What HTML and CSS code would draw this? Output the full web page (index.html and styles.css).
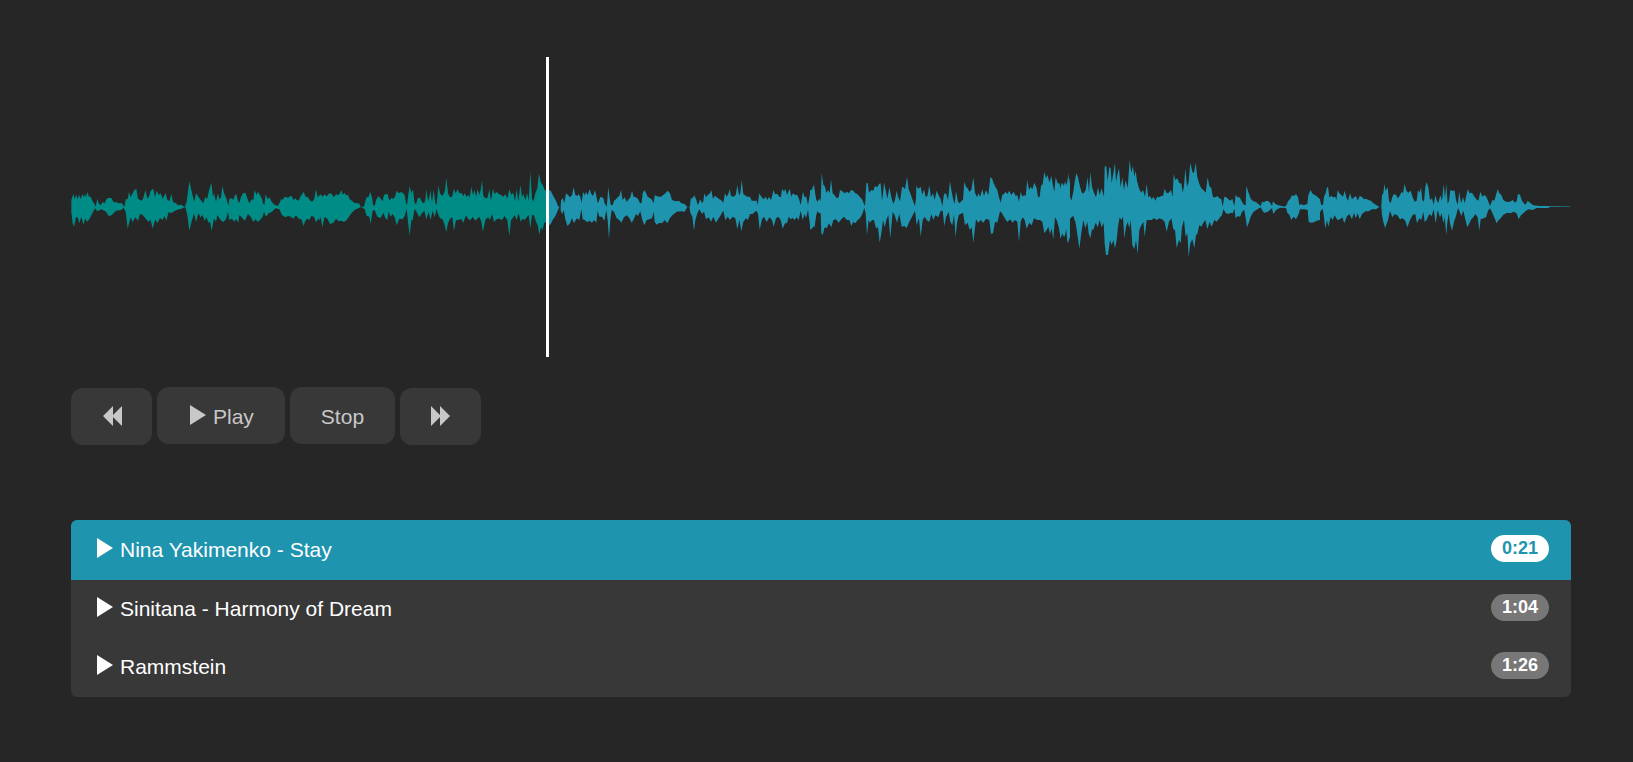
FILE: index.html
```html
<!DOCTYPE html>
<html lang="en">
<head>
<meta charset="utf-8">
<title>Audio player</title>
<link rel="stylesheet" href="styles.css">
</head>
<body>
<main class="player">
  <div class="wave">
    <svg class="wave-svg" viewBox="0 0 4500 900" preserveAspectRatio="none" role="img" aria-label="Waveform">
      <g class="played">
        <path transform="translate(-33 249)" d="M34,201 34,180 40,162 44,178 48,164 53,178 57,164 62,177 67,162 71,172 75,162 78,172 82,156 87,170 92,170 97,182 102,190 107,200 112,176 116,190 122,196 128,186 134,190 140,176 147,173 155,175 160,186 170,187 176,190 186,190 193,201 198,176 203,178 207,156 212,172 218,160 223,150 229,147 234,176 240,180 246,182 251,170 256,150 262,176 267,170 272,152 280,146 285,172 290,152 296,165 302,160 308,176 312,168 317,160 322,180 328,184 334,162 339,186 348,190 354,196 364,194 374,201 380,185 388,124 394,150 399,172 403,185 408,160 415,170 422,180 430,190 436,170 441,178 447,152 454,128 459,170 462,160 468,185 474,160 478,178 483,172 487,138 493,162 499,175 503,190 506,195 508,176 516,175 520,180 525,165 529,163 533,180 537,190 543,172 549,160 556,158 562,175 568,190 575,178 580,180 584,150 590,165 594,155 600,165 606,176 609,190 613,196 617,162 623,178 628,172 635,185 644,195 654,197 660,186 664,176 668,180 673,172 678,170 684,174 688,170 695,167 700,180 706,175 710,180 716,182 722,168 731,156 737,170 744,172 752,184 758,184 763,176 768,148 773,172 780,165 780,240 776,235 768,247 762,230 754,228 748,240 741,236 736,242 731,258 724,238 716,236 708,226 700,236 692,230 684,228 676,232 666,225 658,208 646,205 636,215 626,220 618,230 612,215 608,230 600,240 594,246 586,238 580,246 572,230 564,222 554,242 545,232 538,225 535,248 528,236 524,245 515,236 508,240 504,215 498,238 490,246 484,242 478,235 472,225 468,245 462,235 455,273 450,245 445,248 440,232 434,242 428,225 422,232 415,220 408,246 402,220 396,240 388,272 382,225 376,201 364,206 350,210 340,215 332,220 326,215 319,242 314,228 307,240 300,234 292,250 286,238 278,266 272,240 265,245 256,235 248,225 240,222 234,242 226,232 218,246 212,232 203,266 197,215 191,203 184,210 168,212 155,226 146,228 138,215 124,208 112,214 105,205 96,222 88,238 80,245 76,235 70,254 64,230 58,250 53,232 48,232 42,260 38,250 34,215Z"/>
        <path transform="translate(717 249)" d="M27,201 27,170 32,163 38,170 44,163 50,170 55,162 60,160 66,163 72,172 78,162 84,166 90,160 94,149 98,164 104,158 108,166 114,164 119,178 126,182 132,188 140,190 147,190 152,200 162,200 166,184 170,172 175,172 181,156 186,172 189,195 194,198 199,178 206,168 212,176 218,184 222,164 228,163 233,162 238,182 244,174 250,176 255,170 260,152 266,160 272,156 278,158 284,165 288,190 291,195 294,170 299,138 304,160 309,148 313,185 318,194 323,175 330,173 336,186 342,190 346,180 349,148 354,184 358,172 361,150 366,186 371,150 376,190 380,194 385,137 390,160 396,168 401,162 405,150 409,114 414,160 420,172 426,170 432,146 437,160 443,148 448,160 454,158 460,168 464,160 470,170 474,165 479,172 484,140 489,165 494,150 498,170 503,148 508,165 512,150 516,122 520,168 526,174 532,175 538,148 543,182 549,146 554,162 560,156 567,162 573,165 580,170 586,162 592,176 598,148 604,164 610,158 615,184 620,148 625,185 631,135 636,170 641,162 646,182 651,158 656,182 661,95 666,175 670,185 676,160 682,145 687,100 692,126 698,134 704,150 709,152 714,150 714,262 709,245 702,250 698,270 693,262 688,284 683,255 678,245 672,226 666,224 661,265 656,225 650,232 644,240 638,236 632,245 626,220 620,240 614,225 608,235 603,240 598,288 592,240 584,228 576,240 568,236 560,238 552,246 546,222 540,240 534,232 526,240 519,275 514,245 508,230 502,236 496,242 488,230 482,240 475,238 468,226 460,248 453,236 446,240 438,240 432,273 427,232 420,236 414,250 409,276 404,256 398,238 390,235 384,222 380,206 374,232 368,212 362,240 356,216 349,238 343,212 336,220 328,232 320,216 314,206 308,240 304,240 299,286 294,245 290,207 284,228 278,238 268,236 260,256 254,232 248,222 242,230 236,215 232,240 226,234 220,218 212,234 202,230 194,210 188,212 182,252 178,230 170,228 164,208 154,201 146,204 134,210 124,220 116,232 110,240 102,246 94,242 86,244 78,236 70,248 60,252 52,236 44,230 37,262 32,232 27,242Z"/>
      </g>
      <g class="upcoming">
        <path transform="translate(717 249)" d="M714,150 722,152 730,168 738,182 744,198 748,201 744,210 736,228 728,240 722,252 714,260Z"/>
        <path transform="translate(1467 249)" d="M2,201 3,182 8,174 13,190 18,160 24,165 30,172 36,166 41,142 46,165 52,168 56,162 61,170 65,190 69,155 74,166 78,156 83,165 89,148 94,162 99,168 105,150 109,168 113,190 117,182 121,170 130,174 134,190 140,200 142,180 145,142 149,175 152,194 158,196 162,182 168,178 173,172 178,168 183,150 188,180 194,172 200,185 206,178 211,172 216,152 221,170 227,172 234,176 240,190 245,188 248,160 253,150 258,158 263,170 270,175 275,178 281,190 284,166 290,168 296,170 303,170 310,165 316,160 323,152 330,160 336,180 342,182 350,184 357,182 364,190 374,192 382,201 390,200 392,176 398,174 403,166 409,180 413,195 416,190 421,178 426,190 430,184 433,160 438,172 444,164 450,160 454,150 459,176 464,168 469,170 476,176 483,180 490,188 495,160 500,170 505,162 509,148 513,168 520,170 527,166 532,136 537,166 541,160 545,120 550,162 555,166 562,170 570,170 575,182 582,182 590,182 593,196 598,160 604,170 611,178 617,170 622,180 627,170 633,180 637,166 640,150 645,162 652,162 658,170 662,172 667,146 672,155 676,146 681,165 689,146 694,170 699,160 706,165 712,165 718,180 722,196 729,155 734,172 739,170 744,195 750,162 754,148 758,155 762,132 767,175 772,186 780,175 780,215 774,210 768,225 764,262 758,258 752,270 748,240 744,210 738,235 734,222 728,240 722,212 716,240 710,232 704,240 698,234 692,238 686,230 681,250 675,250 668,266 662,240 655,230 648,235 641,260 636,240 628,232 620,246 612,230 606,238 599,270 594,220 588,212 578,222 570,222 564,240 558,235 550,245 544,274 538,240 532,268 526,235 518,230 510,240 503,230 496,240 490,212 482,226 476,235 468,248 460,230 453,245 446,232 438,238 432,215 426,222 418,208 412,220 406,240 402,272 397,230 391,218 388,201 382,201 374,215 364,214 350,215 338,225 330,234 322,250 314,240 306,250 298,248 290,254 284,245 281,215 276,235 268,238 260,240 253,256 247,240 241,214 234,228 228,222 220,240 215,248 208,234 200,226 192,232 184,248 178,240 170,235 162,215 155,210 151,240 147,298 143,240 139,210 133,242 126,230 118,230 113,212 109,248 102,240 96,248 88,242 82,247 74,240 68,238 64,208 58,240 50,235 42,250 36,234 30,250 22,258 16,238 11,210 7,222 2,212Z"/>
        <path transform="translate(2217 249)" d="M0,201 0,150 5,152 10,136 15,160 20,190 26,180 32,182 35,100 40,134 45,140 49,158 54,150 59,160 63,118 68,160 74,166 80,175 86,172 90,150 97,154 104,160 111,155 117,160 123,150 130,152 136,160 142,162 149,170 156,178 162,192 165,198 169,130 173,128 177,158 184,150 190,152 195,138 202,142 207,132 212,130 216,182 219,160 222,128 227,150 232,176 238,142 244,172 250,192 255,180 260,152 264,170 270,184 276,140 280,142 285,148 291,110 296,148 301,160 307,178 315,198 318,175 319,138 325,146 332,140 337,164 342,148 347,170 352,168 358,136 363,172 369,160 374,180 380,152 386,166 392,178 397,198 402,162 408,160 414,180 420,124 425,155 430,180 434,192 438,152 444,185 449,190 455,182 459,180 463,125 468,140 473,145 478,155 484,150 490,112 495,158 501,172 505,160 510,170 517,148 522,168 528,150 535,165 541,112 546,115 551,130 556,140 562,150 567,172 572,188 577,164 582,162 587,155 592,162 598,152 604,165 611,155 617,168 622,165 627,185 632,155 637,170 642,165 647,168 652,120 657,150 662,140 667,148 673,128 680,145 684,172 689,170 693,138 698,132 703,95 708,115 713,105 718,128 724,108 728,132 733,155 737,112 743,130 748,130 753,150 758,128 764,145 769,130 773,148 777,112 780,130 780,290 774,310 770,262 764,290 758,275 752,295 746,260 740,240 735,232 730,298 725,265 720,282 715,260 710,270 703,280 697,245 690,240 682,240 672,235 665,256 658,248 650,266 644,240 638,232 632,245 627,306 622,245 614,240 608,248 600,238 592,246 584,234 576,220 570,214 562,248 555,245 549,280 543,282 538,240 528,236 520,248 512,240 505,248 498,238 490,308 485,262 479,270 473,248 465,256 459,218 452,222 446,225 441,250 437,292 432,225 427,256 421,245 416,215 408,232 403,258 398,212 392,212 385,232 376,226 370,240 364,222 358,246 350,240 344,230 338,240 332,290 327,235 320,255 315,212 306,230 298,245 290,264 283,258 275,260 268,222 261,248 254,225 248,216 241,294 235,225 229,240 224,262 219,240 214,280 209,308 204,262 198,265 192,240 186,240 180,248 176,240 171,285 167,220 163,204 157,222 150,235 143,240 136,250 130,245 124,258 118,240 110,240 102,230 94,238 86,248 78,238 70,240 64,262 57,250 50,265 44,262 38,285 34,280 32,220 26,218 21,212 14,250 7,265 0,268Z"/>
        <path transform="translate(2967 249)" d="M0,201 0,150 5,128 10,145 15,124 20,140 25,100 30,170 34,182 40,155 44,125 49,100 54,112 60,140 66,160 71,160 77,150 83,112 87,158 91,96 96,142 102,158 108,172 114,142 119,165 125,145 132,170 134,80 139,78 143,122 148,82 152,84 155,130 160,100 165,68 168,125 173,100 177,85 182,142 187,112 192,150 197,120 203,145 209,60 214,98 219,78 223,110 227,92 231,122 236,142 243,158 249,150 255,170 260,132 265,172 270,168 275,178 280,170 286,182 291,170 297,172 303,168 309,168 314,146 320,160 326,158 333,150 338,170 341,102 346,120 352,115 358,130 364,130 368,158 372,138 376,85 381,140 386,125 391,68 397,95 402,100 407,68 412,112 418,132 424,145 430,150 437,158 443,112 448,138 454,145 459,172 466,172 472,168 478,175 484,178 488,200 493,170 499,172 505,178 511,182 517,176 523,198 527,165 533,172 539,172 545,184 552,195 557,195 559,138 565,156 572,176 580,184 588,186 595,192 602,198 606,185 612,187 618,182 626,184 631,190 636,198 639,184 646,192 655,196 665,198 674,200 680,195 684,184 690,178 696,166 702,168 708,162 714,172 718,196 724,192 730,196 742,192 745,165 752,150 758,162 765,165 772,170 780,178 780,240 770,242 762,247 752,248 746,246 743,210 734,208 720,208 716,222 708,238 701,230 694,240 688,224 682,218 678,204 660,203 648,210 640,222 636,204 630,210 622,216 612,218 606,210 602,202 592,208 580,216 572,230 566,250 561,262 557,235 553,210 546,215 540,230 534,228 527,235 523,206 518,220 512,218 506,222 498,220 490,208 486,225 478,235 470,245 463,240 455,260 449,245 442,268 436,240 430,248 424,260 418,255 412,282 408,285 403,325 397,298 391,310 386,352 382,280 377,290 372,240 366,260 362,310 357,300 350,324 345,270 340,268 334,235 327,245 320,275 314,245 306,238 298,235 290,240 282,235 275,240 268,240 260,240 254,290 250,245 243,258 238,270 233,342 228,300 223,328 217,315 212,240 208,265 203,245 198,260 193,295 189,230 184,240 179,232 174,260 170,300 165,325 160,300 155,315 150,300 144,345 138,345 134,310 131,248 125,262 119,240 113,262 107,248 100,270 96,268 91,295 86,280 82,245 76,265 70,240 64,278 58,326 53,290 47,250 40,228 34,232 28,240 23,312 18,262 12,290 6,280 0,296Z"/>
        <path transform="translate(3717 249)" d="M30,201 30,180 34,195 39,195 42,170 47,160 50,145 54,140 58,172 64,168 70,172 76,170 79,180 83,150 88,160 94,165 99,170 104,152 109,172 114,182 120,160 126,178 132,172 138,168 143,182 149,168 155,170 162,178 168,176 175,180 183,182 190,190 200,196 208,201 214,200 216,165 220,160 223,132 227,152 233,142 237,182 242,190 247,170 252,162 258,165 264,175 270,165 275,155 279,160 284,132 289,152 295,158 302,152 308,172 314,185 320,182 324,150 329,158 333,142 337,180 342,185 346,140 350,126 355,142 360,180 366,175 371,195 376,165 380,180 385,190 391,165 396,182 401,132 405,175 409,132 413,192 417,182 421,150 427,152 434,152 438,180 443,195 448,155 453,190 459,172 464,190 468,170 473,148 479,160 486,158 492,168 499,178 505,182 511,155 517,170 523,165 529,170 534,182 540,198 547,180 553,182 558,165 563,148 568,160 574,165 580,180 588,185 595,186 603,184 609,180 614,188 620,184 624,162 630,164 635,180 641,190 647,194 653,182 660,188 670,196 690,198 715,198 720,199 780,199 780,200 720,201 714,204 680,204 668,210 656,208 648,212 640,220 633,226 626,238 620,220 610,215 602,220 592,218 580,224 572,235 566,240 560,250 554,235 546,216 540,205 534,212 528,232 520,235 512,238 508,272 503,232 496,222 490,232 484,238 478,250 472,262 466,238 460,212 454,228 449,215 444,204 438,228 432,245 426,272 420,250 416,220 412,248 409,285 404,232 400,250 395,220 390,232 383,210 377,250 371,208 365,228 358,222 350,240 344,246 340,215 334,240 328,235 321,250 316,222 308,225 300,240 292,262 286,242 278,235 270,238 262,226 254,222 247,232 240,212 234,240 225,264 220,245 216,225 214,201 208,201 198,208 186,208 176,214 166,214 156,222 149,238 143,220 137,235 132,218 126,238 118,222 110,230 103,250 97,232 90,238 82,240 74,226 68,240 62,230 55,260 51,240 46,266 41,225 38,206 30,215Z"/>
      </g>
    </svg>
    <div class="cursor"></div>
  </div>

  <div class="controls">
    <button class="btn btn-icon" type="button" aria-label="Previous"><svg class="skip" viewBox="0 0 20 20"><path d="M11 0v20L1 10zM20 0v20L10 10z"/></svg></button>
    <button class="btn" type="button"><svg class="tri" viewBox="0 0 16 20"><path d="M0 0l16 10L0 20z"/></svg>Play</button>
    <button class="btn" type="button">Stop</button>
    <button class="btn btn-icon" type="button" aria-label="Next"><svg class="skip" viewBox="0 0 20 20"><path d="M0 0v20l10-10zM9 0v20l10-10z"/></svg></button>
  </div>

  <nav class="playlist" aria-label="Playlist">
    <a class="track active" href="#stay"><svg class="tri" viewBox="0 0 16 20"><path d="M0 0l16 10L0 20z"/></svg><span class="title">Nina Yakimenko - Stay</span><span class="badge">0:21</span></a>
    <a class="track" href="#harmony"><svg class="tri" viewBox="0 0 16 20"><path d="M0 0l16 10L0 20z"/></svg><span class="title">Sinitana - Harmony of Dream</span><span class="badge">1:04</span></a>
    <a class="track" href="#rammstein"><svg class="tri" viewBox="0 0 16 20"><path d="M0 0l16 10L0 20z"/></svg><span class="title">Rammstein</span><span class="badge">1:26</span></a>
  </nav>
</main>
</body>
</html>
```
FILE: styles.css
```css
* { box-sizing: border-box; }

body {
  margin: 0;
  background: #262626;
  color: #fff;
  font: 21px/30px "Liberation Sans", Arial, sans-serif;
}

.player { padding: 57px 62px 64px 71px; }

.wave { position: relative; height: 300px; }
.wave-svg { display: block; width: 100%; height: 100%; }
.played { fill: #008c86; }
.upcoming { fill: #1e94af; }

.cursor {
  position: absolute;
  top: 0;
  bottom: 0;
  left: 475px;
  width: 3px;
  background: #fff;
}

.controls {
  display: flex;
  align-items: flex-start;
  gap: 5px;
  margin-top: 30px;
}

.btn {
  display: flex;
  align-items: center;
  height: 57px;
  padding: 2px 31px 0;
  border: 0;
  border-radius: 12px;
  background: #383838;
  color: #c8c8c8;
  font: inherit;
}

.btn .tri { margin-left: 2px; }

.btn-icon {
  justify-content: center;
  width: 81px;
  margin-top: 1px;
  padding: 0 0 2px;
}

.skip { width: 20px; height: 20px; fill: currentColor; }

.tri {
  flex: none;
  width: 16px;
  height: 20px;
  margin: 0 7px 4px 0;
  fill: currentColor;
}

.playlist {
  margin-top: 75px;
  padding-bottom: 1px;
  border-radius: 6px;
  background: #383838;
  overflow: hidden;
}

.track {
  display: flex;
  align-items: center;
  min-height: 58px;
  padding: 0 22px 0 26px;
  color: #fff;
  text-decoration: none;
}

.title { flex: 1; }

.badge {
  min-width: 58px;
  margin-bottom: 3px;
  padding: 0 11px;
  border-radius: 14px;
  background: #777;
  font-size: 18px;
  font-weight: 700;
  line-height: 27px;
  text-align: center;
}

.active { min-height: 60px; background: #1e94af; }
.active .badge { background: #fff; color: #1e94af; }
```
